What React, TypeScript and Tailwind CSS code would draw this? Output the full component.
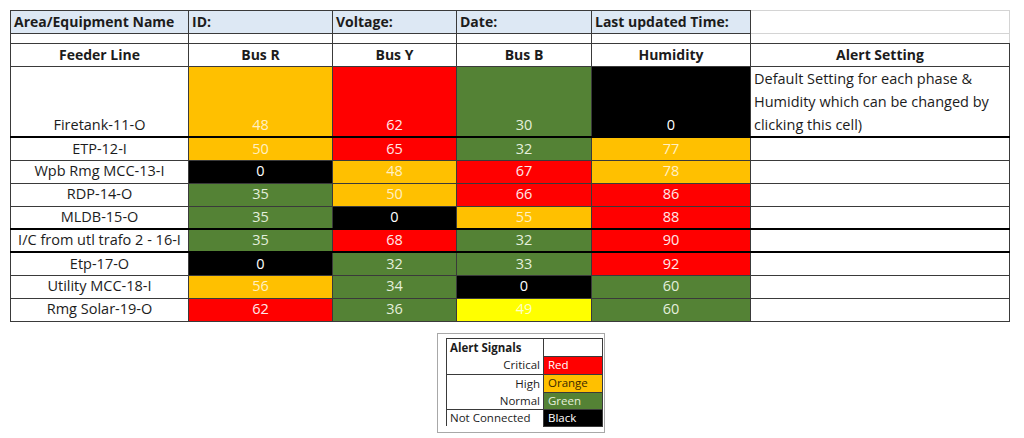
type Tone = "o" | "r" | "g" | "k" | "y";

const tone: Record<Tone, string> = {
  o: "bg-[#ffc000] text-[#fff0c4]",
  r: "bg-[#ff0000] text-[#ffe8e8]",
  g: "bg-[#548235] text-[#e4efdc]",
  k: "bg-black text-white",
  y: "bg-[#ffff00] text-[#ffffc8]",
};

const rows: { name: string; cells: [number, Tone][]; thick?: boolean }[] = [
  { name: "ETP-12-I", cells: [[50, "o"], [65, "r"], [32, "g"], [77, "o"]] },
  { name: "Wpb Rmg MCC-13-I", cells: [[0, "k"], [48, "o"], [67, "r"], [78, "o"]] },
  { name: "RDP-14-O", cells: [[35, "g"], [50, "o"], [66, "r"], [86, "r"]] },
  { name: "MLDB-15-O", cells: [[35, "g"], [0, "k"], [55, "o"], [88, "r"]], thick: true },
  { name: "I/C from utl trafo 2 - 16-I", cells: [[35, "g"], [68, "r"], [32, "g"], [90, "r"]], thick: true },
  { name: "Etp-17-O", cells: [[0, "k"], [32, "g"], [33, "g"], [92, "r"]] },
  { name: "Utility MCC-18-I", cells: [[56, "o"], [34, "g"], [0, "k"], [60, "g"]] },
  { name: "Rmg Solar-19-O", cells: [[62, "r"], [36, "g"], [49, "y"], [60, "g"]] },
];

const line = "border border-[#3a3a3a]";

export default function App() {
  return (
    <div
      className="w-[1024px] h-[438px] bg-white text-[#1c1c1c] pt-[10px] pl-[10px]"
      style={{ fontFamily: '"Open Sans", "Noto Sans", sans-serif' }}
    >
      <table className="table-fixed border-collapse w-[999px] text-[14.5px] leading-none">
        <colgroup>
          <col className="w-[178px]" />
          <col className="w-[144px]" />
          <col className="w-[124px]" />
          <col className="w-[135px]" />
          <col className="w-[159px]" />
          <col className="w-[259px]" />
        </colgroup>
        <tbody>
          {/* info header */}
          <tr className="h-[23px] font-bold text-[14px]">
            <td className={`${line} bg-[#dde8f4] px-[3px] whitespace-nowrap`}>Area/Equipment Name</td>
            <td className={`${line} bg-[#dde8f4] px-[3px]`}>ID:</td>
            <td className={`${line} bg-[#dde8f4] px-[3px]`}>Voltage:</td>
            <td className={`${line} bg-[#dde8f4] px-[3px]`}>Date:</td>
            <td className={`${line} bg-[#dde8f4] px-[3px]`}>Last updated Time:</td>
            <td className="border border-[#d4d4d4]"></td>
          </tr>
          <tr className="h-[10px]">
            <td className={line}></td>
            <td className={line}></td>
            <td className={line}></td>
            <td className={line}></td>
            <td className={line}></td>
            <td className="border border-[#d4d4d4] border-b-[#3a3a3a]"></td>
          </tr>
          {/* column header */}
          <tr className="h-[23px] font-bold text-center text-[14px]">
            <td className={line}>Feeder Line</td>
            <td className={line}>Bus R</td>
            <td className={line}>Bus Y</td>
            <td className={line}>Bus B</td>
            <td className={line}>Humidity</td>
            <td className={line}>Alert Setting</td>
          </tr>
          {/* first feeder, tall row */}
          <tr className="h-[70px] text-center">
            <td className={`${line} border-b-2 border-b-black align-bottom pb-[4px]`}>Firetank-11-O</td>
            <td className={`${line} border-b-2 border-b-black align-bottom pb-[4px] ${tone.o}`}>48</td>
            <td className={`${line} border-b-2 border-b-black align-bottom pb-[4px] ${tone.r}`}>62</td>
            <td className={`${line} border-b-2 border-b-black align-bottom pb-[4px] ${tone.g}`}>30</td>
            <td className={`${line} border-b-2 border-b-black align-bottom pb-[4px] ${tone.k}`}>0</td>
            <td className={`${line} border-b-2 border-b-black align-top text-left px-[3px] leading-[23px]`}>
              Default Setting for each phase &amp; Humidity which can be changed by clicking this cell)
            </td>
          </tr>
          {rows.map((r) => (
            <tr key={r.name} className="h-[23px] text-center">
              <td className={`${line} whitespace-nowrap ${r.thick ? "border-b-2 border-b-black" : ""}`}>{r.name}</td>
              {r.cells.map(([v, t], i) => (
                <td key={i} className={`${line} ${tone[t]} ${r.thick ? "border-b-2 border-b-black" : ""}`}>
                  {v}
                </td>
              ))}
              <td className={`${line} ${r.thick ? "border-b-2 border-b-black" : ""}`}></td>
            </tr>
          ))}
        </tbody>
      </table>

      {/* legend */}
      <div className="ml-[427px] mt-[11px] w-[168px] border border-[#a8a8a8] pl-[8px] pr-[3px] pt-[4px] pb-[5px]">
        <table className="table-fixed border-collapse w-[156px] text-[11.5px] leading-none">
          <colgroup>
            <col className="w-[97px]" />
            <col className="w-[59px]" />
          </colgroup>
          <tbody>
            <tr className="h-[18px]">
              <td className="border-l border-t border-r border-[#3a3a3a] font-bold px-[3px]">Alert Signals</td>
              <td className="border border-[#3a3a3a]"></td>
            </tr>
            <tr className="h-[18px]">
              <td className="border-l border-r border-b border-[#3a3a3a] text-right pr-[3px]">Critical</td>
              <td className="border border-[#3a3a3a] bg-[#ff0000] text-white px-[4px]">Red</td>
            </tr>
            <tr className="h-[18px]">
              <td className="border-l border-r border-[#3a3a3a] text-right pr-[3px]">High</td>
              <td className="border border-[#3a3a3a] bg-[#ffc000] text-[#3a2a00] px-[4px]">Orange</td>
            </tr>
            <tr className="h-[17px]">
              <td className="border-l border-r border-b border-[#3a3a3a] text-right pr-[3px]">Normal</td>
              <td className="border border-[#3a3a3a] bg-[#548235] text-[#e4efdc] px-[4px]">Green</td>
            </tr>
            <tr className="h-[17px]">
              <td className="border-l border-r border-[#3a3a3a] px-[3px] whitespace-nowrap">Not Connected</td>
              <td className="border border-[#3a3a3a] bg-black text-white px-[4px]">Black</td>
            </tr>
          </tbody>
        </table>
      </div>
    </div>
  );
}
